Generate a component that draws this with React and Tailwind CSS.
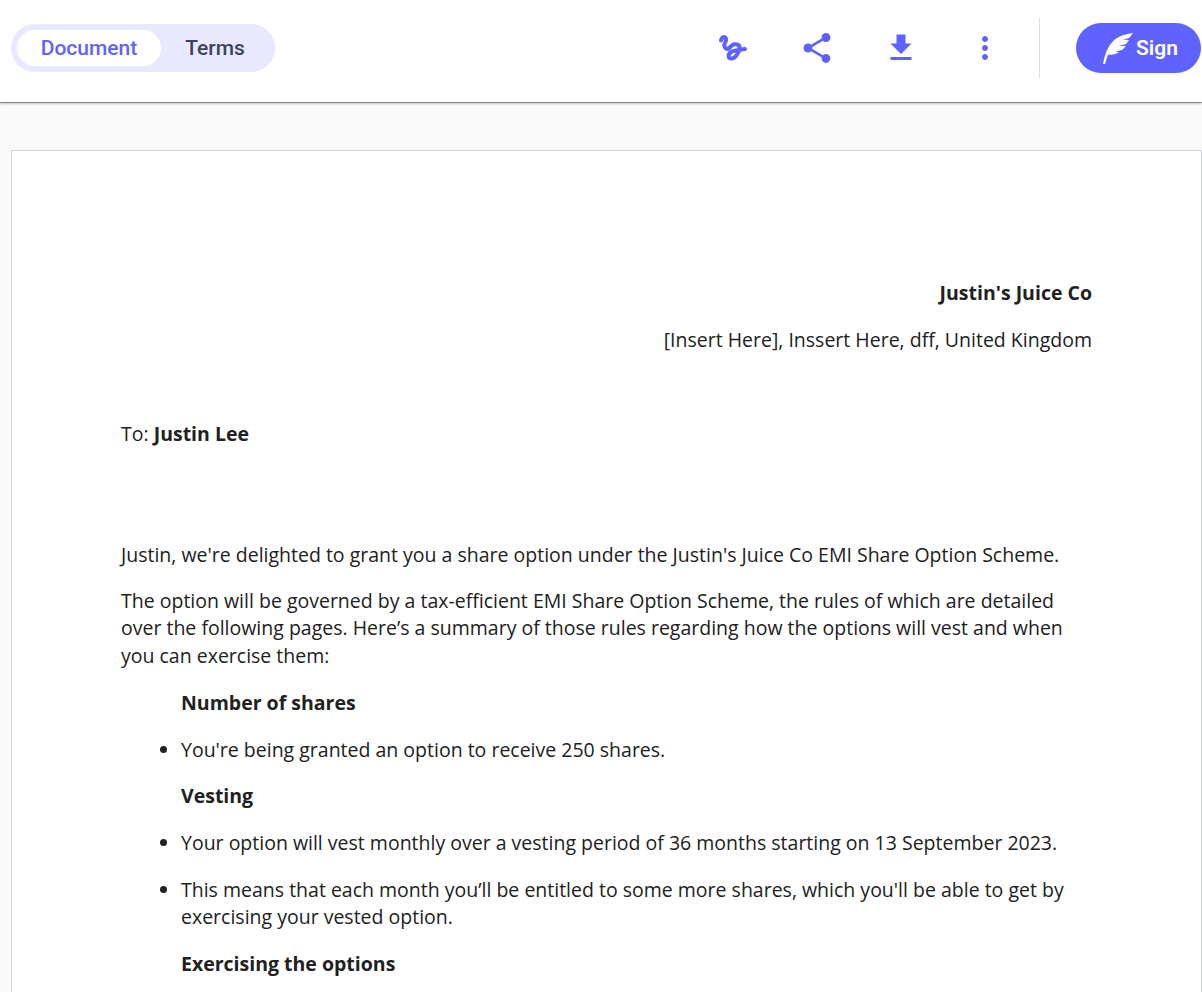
import React from 'react';

function SquiggleIcon() {
  return (
    <svg width="42" height="40" viewBox="0 0 42 40" fill="none" stroke="#5f62ff" strokeWidth="4" strokeLinecap="round" strokeLinejoin="round">
      <path d="M9 12.500C9.500 9 13 8 14 10.500C15 14 10.500 15.500 13 19.500C16 23.500 18.500 17.500 21.500 16.500C25 15.500 28 17 27.500 20.500C27 25 23 30.500 19.500 30.500C16 30.500 15.500 26.500 19 24C22 22 27 22 33 21" />
    </svg>
  );
}

function ShareIcon() {
  return (
    <svg width="36" height="36" viewBox="0 0 24 24" fill="#5f62ff">
      <path d="M18 16.080c-.76 0-1.440.3-1.960.770L8.910 12.700c.05-.230.090-.460.090-.700s-.040-.470-.090-.700l7.050-4.110c.540.500 1.250.810 2.040.810 1.660 0 3-1.340 3-3s-1.340-3-3-3-3 1.340-3 3c0 .240.040.470.090.700L8.040 9.810C7.500 9.310 6.790 9 6 9c-1.660 0-3 1.340-3 3s1.340 3 3 3c.790 0 1.500-.310 2.040-.810l7.120 4.160c-.050.210-.080.430-.080.650 0 1.610 1.310 2.920 2.920 2.920s2.920-1.310 2.920-2.920-1.310-2.920-2.920-2.920z" />
    </svg>
  );
}

function DownloadIcon() {
  return (
    <svg width="36" height="36" viewBox="0 0 24 24" fill="#5f62ff">
      <path d="M19 9h-4V3H9v6H5l7 7 7-7zM5 18v2h14v-2H5z" />
    </svg>
  );
}

function MoreIcon() {
  return (
    <svg width="36" height="36" viewBox="0 0 24 24" fill="#5f62ff">
      <path d="M12 8c1.100 0 2-.9 2-2s-.9-2-2-2-2 .9-2 2 .9 2 2 2zm0 2c-1.100 0-2 .9-2 2s.9 2 2 2 2-.9 2-2-.9-2-2-2zm0 6c-1.100 0-2 .9-2 2s.9 2 2 2 2-.9 2-2-.9-2-2-2z" />
    </svg>
  );
}

function FeatherIcon() {
  return (
    <svg width="30" height="32" viewBox="8 4 30 32" fill="#fff">
      <path d="M8 36C10 25 14 15 22 10C27 7 32 6 38 5L34 10L28 11.500L34 12L31 16L24 18L31 18L27 22L20 23.500L24 24C20 27 16 27 13 26.500L10 36Z" />
    </svg>
  );
}

export default function App() {
  return (
    <div className="h-[992px] overflow-hidden bg-[#fafafa] font-['Open_Sans',sans-serif] text-[19.5px] leading-[27.3px] text-[#212121]">
      <header className="relative flex h-[102px] items-center justify-between bg-white pb-[6px] pl-[11px] pr-px shadow-[0_1px_0_rgba(0,0,0,0.33),0_2px_2px_rgba(0,0,0,0.22)]">
        <div className="flex h-12 w-[264px] items-center rounded-full bg-[#e8e8fe] px-1.5 font-['Roboto',sans-serif] text-[21px] font-medium">
          <div className="flex h-9 w-36 items-center justify-center rounded-full bg-white pt-px text-[#5f62ff]">Document</div>
          <div className="flex h-9 w-[108px] items-center justify-center pt-px text-[#3c4260]">Terms</div>
        </div>
        <div className="flex items-center">
          <div className="flex w-[84px] justify-center"><SquiggleIcon /></div>
          <div className="flex w-[84px] justify-center"><ShareIcon /></div>
          <div className="flex w-[84px] justify-center"><DownloadIcon /></div>
          <div className="flex w-[84px] justify-center"><MoreIcon /></div>
          <div className="ml-[12px] mr-9 h-[60px] w-px bg-[#dedede]" />
          <button className="flex h-[50px] w-[125px] items-center gap-[3px] rounded-full bg-[#5f62ff] pl-[27px] font-['Roboto',sans-serif] text-[21px] font-semibold text-white">
            <FeatherIcon />
            <span className="pt-px">Sign</span>
          </button>
        </div>
      </header>
      <main className="ml-[11px] mt-[48px] h-[900px] border border-[#d0d3de] bg-white px-[109px] pt-[128px]">
        <p className="mb-5 text-right font-bold">Justin's Juice Co</p>
        <p className="text-right">[Insert Here], Inssert Here, dff, United Kingdom</p>
        <p className="mt-[66.7px]">To: <strong className="font-bold">Justin Lee</strong></p>
        <p className="mb-[18.6px] mt-[93.7px]">Justin, we're delighted to grant you a share option under the Justin's Juice Co EMI Share Option Scheme.</p>
        <p className="mb-5">The option will be governed by a tax-efficient EMI Share Option Scheme, the rules of which are detailed over the following pages. Here’s a summary of those rules regarding how the options will vest and when you can exercise them:</p>
        <div className="pl-[60px]">
          <p className="mb-[19.9px] font-bold">Number of shares</p>
          <ul className="mb-[18.6px] list-disc">
            <li>You're being granted an option to receive 250 shares.</li>
          </ul>
          <p className="mb-[19.9px] font-bold">Vesting</p>
          <ul className="mb-[19.5px] flex list-disc flex-col gap-[19.5px]">
            <li>Your option will vest monthly over a vesting period of 36 months starting on 13 September 2023.</li>
            <li>This means that each month you’ll be entitled to some more shares, which you'll be able to get by exercising your vested option.</li>
          </ul>
          <p className="font-bold">Exercising the options</p>
        </div>
      </main>
    </div>
  );
}
